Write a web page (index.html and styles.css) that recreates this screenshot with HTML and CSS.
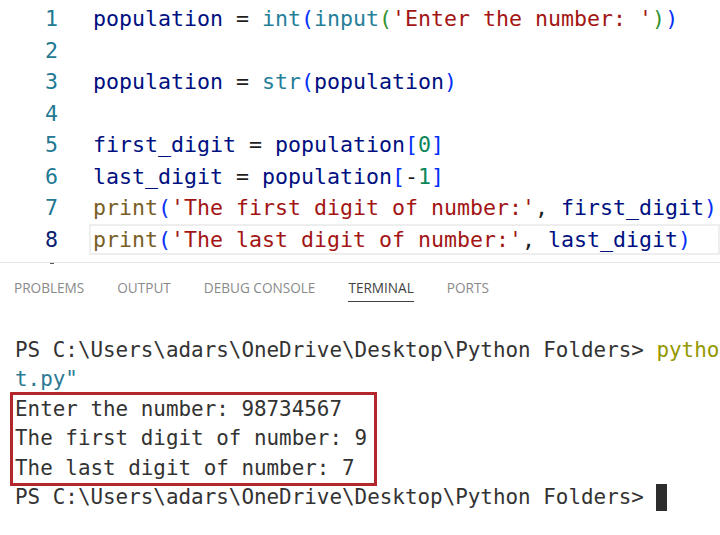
FILE: index.html
```html
<!DOCTYPE html>
<html>
<head>
<meta charset="utf-8">
<link rel="stylesheet" href="styles.css">
</head>
<body>
<div class="editor">
  <div class="line"><span class="ln">1</span><span class="code"><span class="v">population</span> = <span class="t">int</span><span class="b1">(</span><span class="t">input</span><span class="b2">(</span><span class="s">'Enter the number: '</span><span class="b2">)</span><span class="b1">)</span></span></div>
  <div class="line"><span class="ln">2</span><span class="code"></span></div>
  <div class="line"><span class="ln">3</span><span class="code"><span class="v">population</span> = <span class="t">str</span><span class="b1">(</span><span class="v">population</span><span class="b1">)</span></span></div>
  <div class="line"><span class="ln">4</span><span class="code"></span></div>
  <div class="line"><span class="ln">5</span><span class="code"><span class="v">first_digit</span> = <span class="v">population</span><span class="b1">[</span><span class="n">0</span><span class="b1">]</span></span></div>
  <div class="line"><span class="ln">6</span><span class="code"><span class="v">last_digit</span> = <span class="v">population</span><span class="b1">[</span>-<span class="n">1</span><span class="b1">]</span></span></div>
  <div class="line"><span class="ln">7</span><span class="code"><span class="f">print</span><span class="b1">(</span><span class="s">'The first digit of number:'</span>, <span class="v">first_digit</span><span class="b1">)</span></span></div>
  <div class="line active"><span class="ln">8</span><span class="code"><span class="f">print</span><span class="b1">(</span><span class="s">'The last digit of number:'</span>, <span class="v">last_digit</span><span class="b1">)</span></span></div>
</div>
<div class="panel">
  <span class="sash"></span>
  <div class="tabs">
    <span class="tab">PROBLEMS</span>
    <span class="tab">OUTPUT</span>
    <span class="tab">DEBUG CONSOLE</span>
    <span class="tab current">TERMINAL</span>
    <span class="tab">PORTS</span>
  </div>
  <div class="terminal">
    <div class="tl">PS C:\Users\adars\OneDrive\Desktop\Python Folders&gt; <span class="cmd">python</span> <span class="arg">-u "c:\Users\adars\OneDrive\Desktop\Python Folders\firs</span></div>
    <div class="tl"><span class="arg">t.py"</span></div>
    <div class="hl">
      <div class="tl">Enter the number: 98734567</div>
      <div class="tl">The first digit of number: 9</div>
      <div class="tl">The last digit of number: 7</div>
    </div>
    <div class="tl">PS C:\Users\adars\OneDrive\Desktop\Python Folders&gt; <span class="cursor"></span></div>
  </div>
</div>
</body>
</html>
```

FILE: styles.css
```css
html, body {
  margin: 0;
  padding: 0;
  background: #ffffff;
  overflow: hidden;
}
body {
  width: 720px;
  height: 535px;
}
.editor {
  padding-top: 3px;
  font-family: "DejaVu Sans Mono", "Liberation Mono", monospace;
  font-size: 21.6px;
  color: #1e1e1e;
}
.line {
  display: flex;
  height: 31.5px;
  line-height: 31.5px;
  white-space: pre;
}
.ln {
  width: 58px;
  text-align: right;
  color: #237893;
  flex: none;
}
.code {
  flex: 1;
  margin-left: 31px;
  padding-left: 4px;
  overflow: hidden;
}
.active .ln { color: #0b216f; }
.active .code { box-shadow: inset 0 0 0 2px #eeeeee; }
.v { color: #001080; }
.t { color: #267f99; }
.f { color: #795e26; }
.s { color: #a31515; }
.n { color: #098658; }
.b1 { color: #0431fa; }
.b2 { color: #319331; }

.panel {
  position: relative;
  margin-top: 7px;
  border-top: 1px solid #e4e4e4;
}
.sash {
  position: absolute;
  left: 50px;
  top: 0;
  width: 4px;
  height: 1px;
  background: #555;
}
.tabs {
  display: flex;
  gap: 33px;
  padding-left: 14px;
  font-family: "Open Sans", "Noto Sans", sans-serif;
  font-size: 13.6px;
}
.tab {
  padding-top: 16px;
  line-height: 18px;
  padding-bottom: 4px;
  border-bottom: 1px solid transparent;
  color: #8a8a8a;
}
.tab.current {
  color: #424242;
  border-bottom-color: #424242;
}
.terminal {
  margin-top: 34px;
  padding-left: 15px;
  font-family: "DejaVu Sans Mono", "Liberation Mono", monospace;
  font-size: 20.9px;
  color: #333333;
}
.tl {
  height: 29.4px;
  line-height: 29.4px;
  white-space: pre;
  overflow: hidden;
}
.cmd { color: #949800; }
.arg { color: #2b7a94; }
.hl {
  box-sizing: border-box;
  width: 367px;
  margin: -3px 0 -3px -5px;
  padding-left: 2px;
  border: 3px solid #b3262b;
}
.cursor {
  display: inline-block;
  width: 11px;
  height: 27px;
  background: #2d2d2d;
  vertical-align: middle;
}
```
